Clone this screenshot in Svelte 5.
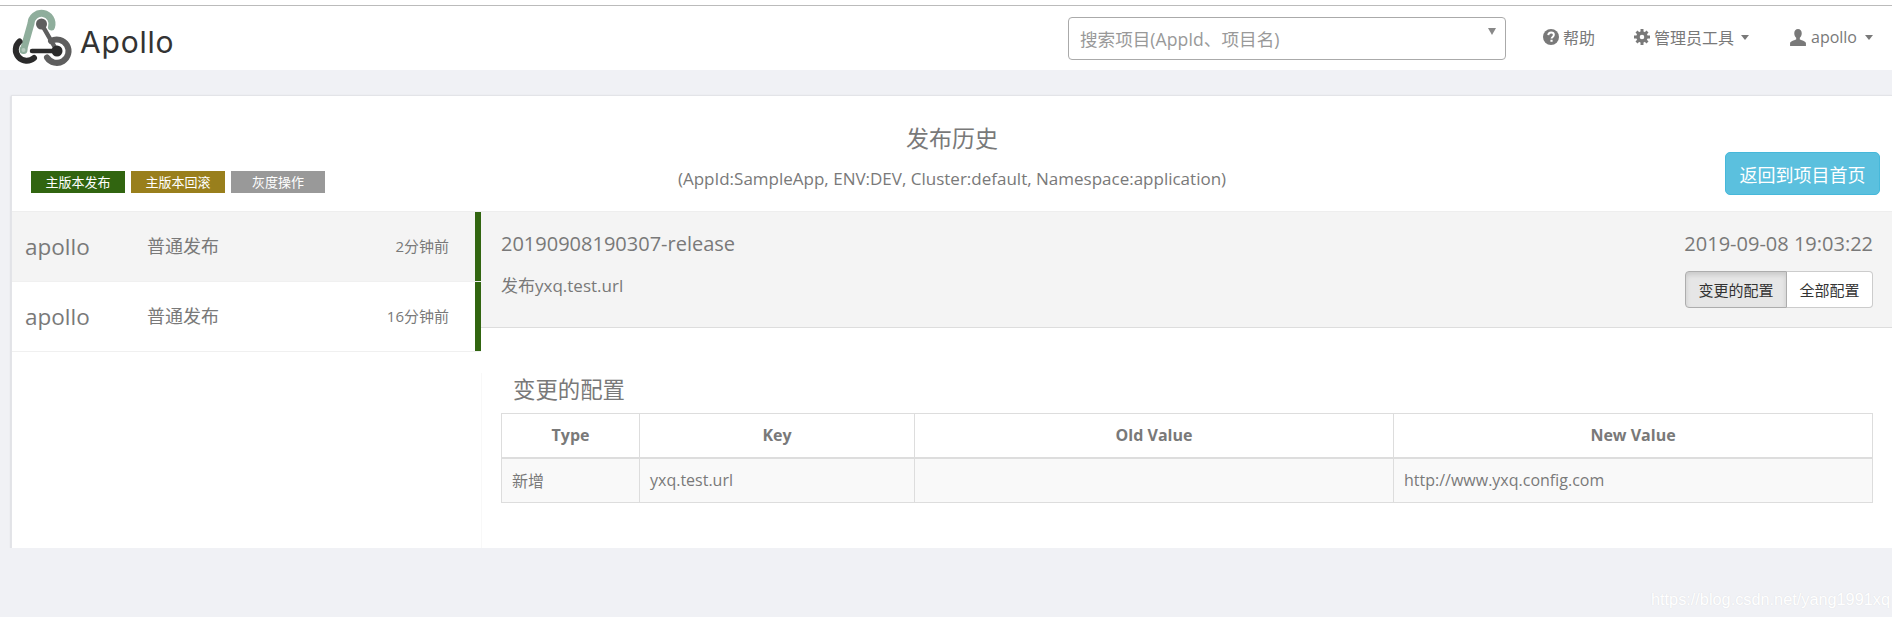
<script>
	const rows = [
		{ user: 'apollo', op: '普通发布', time: '2分钟前', active: true },
		{ user: 'apollo', op: '普通发布', time: '16分钟前', active: false }
	];
	const legend = [
		{ label: '主版本发布', color: '#316510' },
		{ label: '主版本回滚', color: '#997f1c' },
		{ label: '灰度操作', color: '#999999' }
	];
</script>

<div class="top">
	<header>
		<div class="brand">
			<svg width="76" height="64" viewBox="0 6 76 64" fill="none" stroke-linecap="round" stroke-linejoin="round">
				<path d="M51.500 27A10.500 10.500 0 1 0 31 23.500L23.500 50" stroke="#8fae9c" stroke-width="7" />
				<circle cx="23.500" cy="50" r="3" fill="#b5cabd" stroke="#8fae9c" stroke-width="2" />
				<path d="M19.500 41.500A10.800 10.800 0 1 0 34 58" stroke="#2b2b2b" stroke-width="6" />
				<path d="M51 41A11.700 11.700 0 1 1 47 57.500" stroke="#5e5e5e" stroke-width="6" />
				<path d="M41.500 24L57 51" stroke="#5e5e5e" stroke-width="4.500" />
				<circle cx="41.500" cy="24" r="5.500" fill="#5e5e5e" />
				<path d="M32 51H57" stroke="#2b2b2b" stroke-width="4.500" />
				<circle cx="57" cy="51" r="5.500" fill="#2b2b2b" />
			</svg>
			<span class="logo-text">Apollo</span>
		</div>
		<div class="search">
			<span>搜索项目(AppId、项目名)</span>
			<i class="search-arrow"></i>
		</div>
		<nav>
			<a href="#help" class="help">
				<svg width="16" height="16" viewBox="0 0 14 14">
					<circle cx="7" cy="7" r="7" fill="#797979" />
					<path d="M4.600 5.400C4.700 3.900 5.700 3.100 7.100 3.100c1.400 0 2.400.8 2.400 2 0 1.900-2 1.700-2 3.300" fill="none" stroke="#fff" stroke-width="1.700" />
					<rect x="6.500" y="9.400" width="1.900" height="1.800" fill="#fff" />
				</svg>
				帮助
			</a>
			<a href="#admin" class="admin">
				<svg width="16" height="16" viewBox="0 0 14 14">
					<circle cx="7" cy="7" r="3.500" fill="none" stroke="#797979" stroke-width="3" />
					<path d="M5.700 0h2.600v3H5.700zM5.700 11h2.600v3H5.700zM0 5.700h3v2.600H0zM11 5.700h3v2.600h-3zM1.300 3.100L3.100 1.300 5 3.200 3.200 5zM9 10.800L10.800 9l1.900 1.900-1.800 1.800zM10.900 1.300l1.800 1.800L10.800 5 9 3.200zM3.200 9L5 10.800l-1.900 1.900-1.800-1.800z" fill="#797979" />
				</svg>
				管理员工具
				<i class="caret"></i>
			</a>
			<a href="#user" class="user">
				<svg width="16" height="17" viewBox="0 0 14 15">
					<path d="M7 0c2 0 3.300 1.500 3.300 3.700 0 1.800-.8 3.300-1.700 4.100v1.400c2 .8 5.400 1.500 5.400 3.300V15H0v-2.500c0-1.800 3.400-2.500 5.400-3.300V7.800C4.500 7 3.700 5.500 3.700 3.700 3.700 1.500 5 0 7 0z" fill="#797979" />
				</svg>
				apollo
				<i class="caret"></i>
			</a>
		</nav>
	</header>
</div>

<main class="panel">
	<section class="panel-head">
		<div class="legend">
			{#each legend as item}
				<span class="badge" style="background: {item.color}">{item.label}</span>
			{/each}
		</div>
		<div class="title">
			<h3>发布历史</h3>
			<p>(AppId:SampleApp, ENV:DEV, Cluster:default, Namespace:application)</p>
		</div>
		<div class="back">
			<button class="back-btn">返回到项目首页</button>
		</div>
	</section>

	<section class="panel-body">
		<div class="history">
			{#each rows as row}
				<div class="row" class:active={row.active}>
					<span class="user-name">{row.user}</span>
					<span class="op">{row.op}</span>
					<span class="time">{row.time}</span>
					<span class="bar"></span>
				</div>
			{/each}
		</div>
		<div class="content">
			<div class="release">
				<div>
					<h4>20190908190307-release</h4>
					<p>发布yxq.test.url</p>
				</div>
				<div class="release-right">
					<span class="date">2019-09-08 19:03:22</span>
					<div class="btn-group">
						<button class="on">变更的配置</button>
						<button>全部配置</button>
					</div>
				</div>
			</div>
			<div class="changes">
				<h3>变更的配置</h3>
				<table>
					<thead>
						<tr>
							<th class="c1">Type</th>
							<th class="c2">Key</th>
							<th class="c3">Old Value</th>
							<th>New Value</th>
						</tr>
					</thead>
					<tbody>
						<tr>
							<td>新增</td>
							<td>yxq.test.url</td>
							<td></td>
							<td>http://www.yxq.config.com</td>
						</tr>
					</tbody>
				</table>
			</div>
		</div>
	</section>
</main>

<div class="watermark">https://blog.csdn.net/yang1991xq</div>

<style>
	:global(body) {
		background: #f0f1f5;
		font-family: 'Open Sans', 'Noto Sans CJK SC', sans-serif;
		color: #797979;
		overflow: hidden;
	}
	.top {
		background: #fff;
		padding-top: 5px;
	}
	header {
		display: flex;
		align-items: center;
		height: 64px;
		border-top: 1px solid #bbb;
	}
	.brand {
		display: flex;
		align-items: center;
	}
	.logo-text {
		font-family: Inter, sans-serif;
		font-size: 30px;
		color: #333;
		margin: 8px 0 0 4px;
		letter-spacing: 0.8px;
	}
	.search {
		margin-left: auto;
		width: 416px;
		height: 41px;
		border: 1px solid #aaa;
		border-radius: 4px;
		display: flex;
		align-items: center;
		justify-content: space-between;
		padding: 0 9px 0 11px;
		font-size: 17.600px;
		color: #999;
	}
	.search-arrow {
		border-left: 4px solid transparent;
		border-right: 4px solid transparent;
		border-top: 7px solid #888;
		margin-top: -13px;
	}
	nav {
		display: flex;
		align-items: center;
		font-size: 16px;
		margin-left: 37px;
		margin-right: 19px;
		margin-top: -2px;
	}
	nav a {
		color: #797979;
		text-decoration: none;
		display: flex;
		align-items: center;
		gap: 4px;
	}
	nav .admin {
		margin-left: 39px;
	}
	nav .user {
		margin-left: 41px;
		gap: 5px;
	}
	.caret {
		border-left: 4px solid transparent;
		border-right: 4px solid transparent;
		border-top: 5px solid #797979;
		margin-left: 3px;
	}
	.panel {
		margin: 25px 0 0 11px;
		height: 452px;
		background: #fff;
		border: 1px solid #e3e4e8;
		border-right: 0;
		border-bottom: 0;
		box-shadow: 0 1px 2px rgba(0, 0, 0, 0.18);
		display: flex;
		flex-direction: column;
	}
	.panel-head {
		flex: none;
		height: 115px;
		display: grid;
		grid-template-columns: 1fr auto 1fr;
	}
	.legend {
		display: flex;
		align-items: flex-end;
		gap: 6px;
		padding: 0 0 18px 19px;
	}
	.badge {
		width: 94px;
		height: 22px;
		line-height: 22px;
		text-align: center;
		font-size: 13px;
		color: #fff;
	}
	.title {
		text-align: center;
	}
	.title h3 {
		margin: 25px 0 0;
		font-size: 23px;
		font-weight: 400;
		line-height: 34px;
	}
	.title p {
		margin: 0;
		padding-top: 12px;
		font-size: 17px;
		line-height: 24px;
	}
	.back {
		display: flex;
		justify-content: flex-end;
		align-items: flex-end;
		padding: 0 12px 16px 0;
	}
	.back-btn {
		width: 155px;
		height: 43px;
		background: #5bc0de;
		border: 1px solid #46b8da;
		border-radius: 5px;
		color: #fff;
		font: inherit;
		font-size: 18px;
		padding: 0;
	}
	.panel-body {
		flex: 1;
		display: grid;
		grid-template-columns: 469px 1fr;
		border-top: 1px solid #eee;
	}
	.row {
		height: 69px;
		display: flex;
		align-items: center;
		border-bottom: 1px solid #f0f0f0;
		padding-left: 13px;
	}
	.row.active {
		background: #f4f4f4;
	}
	.user-name {
		width: 122px;
		font-size: 22.500px;
		margin-top: -1px;
	}
	.op {
		font-size: 18px;
		margin-top: -4px;
	}
	.time {
		margin-left: auto;
		margin-right: 26px;
		font-size: 15px;
		margin-top: -3px;
	}
	.bar {
		width: 6px;
		height: 69px;
		background: #316510;
	}
	.release {
		height: 115px;
		background: #f4f4f4;
		border-bottom: 1px solid #ddd;
		display: flex;
		justify-content: space-between;
		padding: 0 19px 0 20px;
	}
	.release h4 {
		margin: 20px 0 0;
		font-size: 20px;
		font-weight: 400;
		line-height: 24px;
	}
	.release p {
		margin: 18px 0 0;
		font-size: 17px;
		line-height: 24px;
	}
	.release-right {
		display: flex;
		flex-direction: column;
		align-items: flex-end;
	}
	.date {
		margin-top: 20px;
		font-size: 20px;
		line-height: 24px;
	}
	.btn-group {
		display: flex;
		margin-top: 15px;
	}
	.btn-group button {
		height: 37px;
		background: #fff;
		border: 1px solid #ccc;
		border-left: 0;
		border-radius: 0 4px 4px 0;
		font: inherit;
		font-size: 15px;
		color: #333;
		padding: 0;
		width: 86px;
	}
	.btn-group button.on {
		width: 102px;
		background: #e6e6e6;
		border: 1px solid #adadad;
		border-radius: 4px 0 0 4px;
		box-shadow: inset 0 3px 5px rgba(0, 0, 0, 0.125);
	}
	.changes {
		height: 196px;
		box-sizing: border-box;
		border-bottom: 1px solid #f2f2f2;
		border-left: 1px solid #f8f8f8;
		padding: 0 19px 0 19px;
	}
	.changes h3 {
		margin: 45px 0 7px 12px;
		font-size: 22.400px;
		font-weight: 400;
		line-height: 33px;
	}
	table {
		width: 100%;
		border-collapse: collapse;
		table-layout: fixed;
		font-size: 16px;
	}
	th,
	td {
		border: 1px solid #ddd;
		padding: 0 10px;
		height: 45px;
		box-sizing: border-box;
	}
	th {
		height: 44px;
		font-weight: 700;
		border-bottom-width: 2px;
		text-align: center;
	}
	tbody tr {
		background: #f9f9f9;
	}
	.c1 {
		width: 138px;
	}
	.c2 {
		width: 275px;
	}
	.c3 {
		width: 479px;
	}
	.watermark {
		position: absolute;
		left: 1651px;
		top: 590px;
		font-family: 'Liberation Sans', sans-serif;
		font-size: 16.300px;
		color: #fff;
		text-shadow: 0 0 1px rgba(170, 170, 170, 0.3);
		white-space: nowrap;
	}
</style>
